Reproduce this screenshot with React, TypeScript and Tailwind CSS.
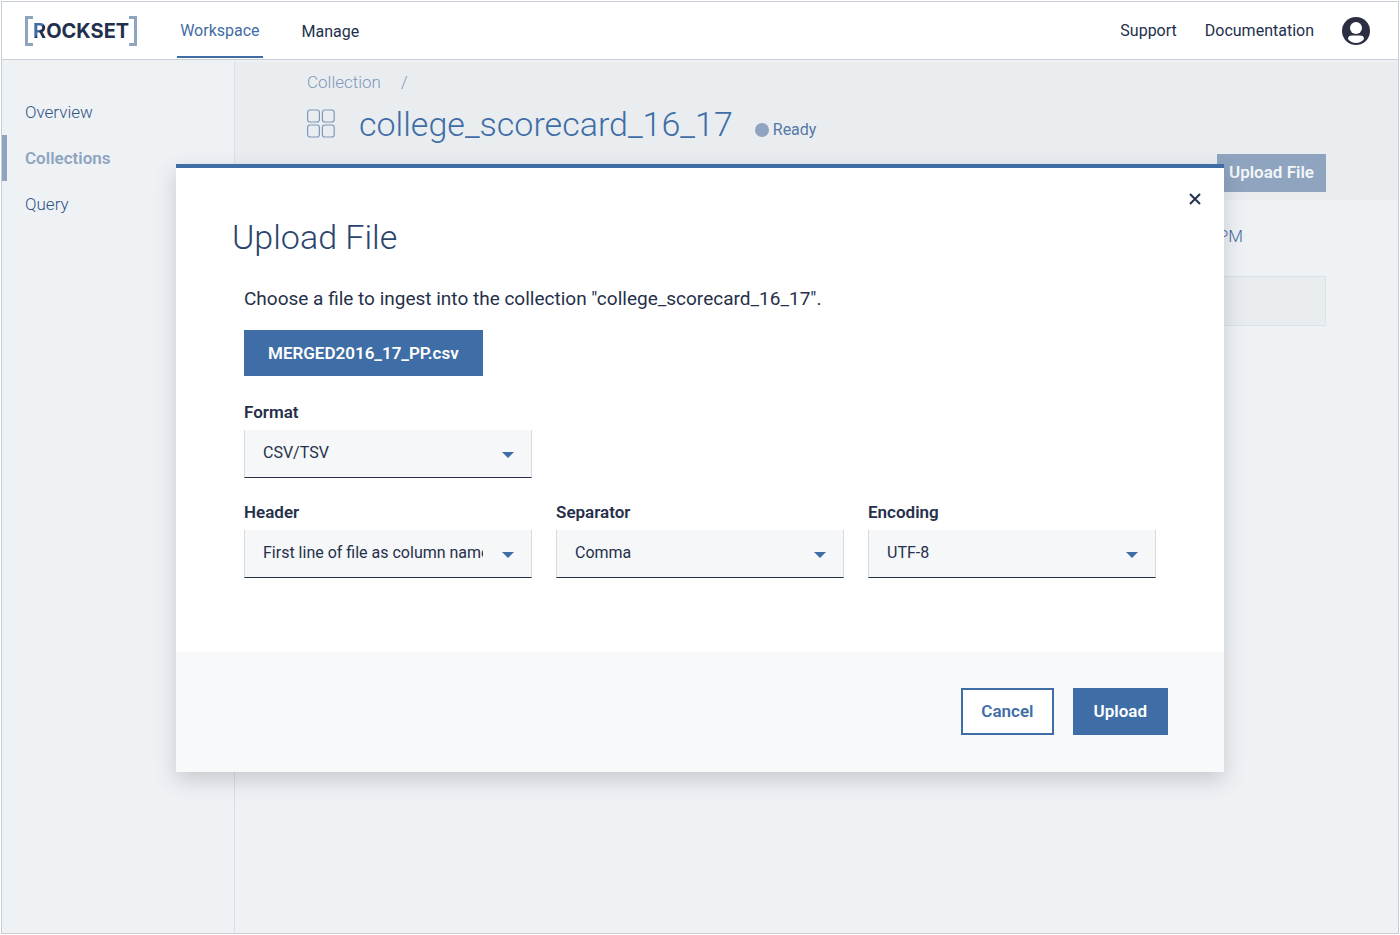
import type { ReactNode } from "react";

const sans = "font-['Roboto','Noto_Sans',sans-serif]";

function Logo() {
  return (
    <a href="#home" aria-label="Rockset home" className="flex h-[30px] items-stretch">
      <span className="w-2 border-y-3 border-l-3 border-[#8fa4be]" />
      <span className="flex items-center font-['Inter',sans-serif] text-[20px] leading-none font-bold text-[#23304d]">
        <span className="bg-linear-to-br from-[#3f6da6] from-50% to-[#23304d] to-50% bg-clip-text text-transparent">R</span>
        OCKSET
      </span>
      <span className="w-2 border-y-3 border-r-3 border-[#8fa4be]" />
    </a>
  );
}

function Avatar() {
  return (
    <svg viewBox="0 0 28 28" className="size-7" aria-hidden="true">
      <circle cx="14" cy="14" r="14" fill="#2b2f41" />
      <circle cx="14" cy="11" r="6" fill="#fff" />
      <path d="M6 22C6 19.500 7.500 18.500 10 18.500H18C20.500 18.500 22 19.500 22 22C20 24.700 17.200 26 14 26C10.800 26 8 24.700 6 22Z" fill="#fff" />
    </svg>
  );
}

function GridIcon() {
  return (
    <svg viewBox="0 0 30 30" className="size-[30px] shrink-0" fill="none" stroke="#7f98b8" strokeWidth="1.2" aria-hidden="true">
      <rect x="0.600" y="1" width="11.800" height="12" rx="2.500" />
      <rect x="15.400" y="1" width="11.800" height="12" rx="2.500" />
      <rect x="0.600" y="16" width="11.800" height="12" rx="2.500" />
      <rect x="15.400" y="16" width="11.800" height="12" rx="2.500" />
    </svg>
  );
}

function SelectField({ id, label, value }: { id: string; label: string; value: string }) {
  return (
    <div className="flex flex-col gap-[6px]">
      <label htmlFor={id} className="text-[17px] leading-6 font-semibold text-[#26304a]">
        {label}
      </label>
      <div className="relative">
        <select
          id={id}
          defaultValue={value}
          className="block h-12 w-full appearance-none border-x border-b border-x-[#d5dae0] border-b-[#26304a] bg-[#f5f7f9] pr-12 pb-px pl-[18px] text-base text-[#26304a]"
        >
          <option>{value}</option>
        </select>
        <svg viewBox="0 0 12 6" className="pointer-events-none absolute top-[22px] right-[18px] h-[6px] w-3" aria-hidden="true">
          <path d="M0 0h12L6 6z" fill="#3f6da6" />
        </svg>
      </div>
    </div>
  );
}

function SideLink({ active, children }: { active?: boolean; children: ReactNode }) {
  return (
    <a
      href="#section"
      className={
        active
          ? "flex h-[46px] items-center border-l-5 border-[#8fa4be] pt-[2px] pl-[18px] font-semibold text-[#8fa4be]"
          : "flex h-[46px] items-center border-l-5 border-transparent pt-[2px] pl-[18px] font-light text-[#2f5286]"
      }
    >
      {children}
    </a>
  );
}

function UploadDialog() {
  return (
    <section
      role="dialog"
      aria-labelledby="dialog-title"
      className="w-full max-w-[1048px] border-t-4 border-[#3f6da6] bg-white shadow-[0_8px_20px_rgba(60,60,70,0.22)]"
    >
      <div className="flex justify-end pt-[19px] pr-[17px]">
        <button type="button" aria-label="Close" className="flex size-6 items-center justify-center">
          <svg viewBox="0 0 12 12" className="size-3" stroke="#23304d" strokeWidth="2" aria-hidden="true">
            <path d="M1 1l10 10M11 1L1 11" />
          </svg>
        </button>
      </div>
      <h2 id="dialog-title" className="px-14 text-[34px] leading-[52px] font-light text-[#2c446d]">
        Upload File
      </h2>
      <div className="px-[68px] pt-6 pb-[74px]">
        <p className="text-[19px] leading-6 text-[#26304a]">
          Choose a file to ingest into the collection "college_scorecard_16_17".
        </p>
        <button type="button" className="mt-[19px] h-[46px] bg-[#3f6da6] px-6 pt-[2px] text-[17px] font-semibold text-white">
          MERGED2016_17_PP.csv
        </button>
        <div className="mt-6 grid grid-cols-3 gap-x-6 gap-y-[22px]">
          <SelectField id="format" label="Format" value="CSV/TSV" />
          <div className="col-span-2" />
          <SelectField id="header" label="Header" value="First line of file as column names" />
          <SelectField id="separator" label="Separator" value="Comma" />
          <SelectField id="encoding" label="Encoding" value="UTF-8" />
        </div>
      </div>
      <footer className="flex justify-end gap-[19px] bg-[#f8f9fb] px-14 pt-9 pb-[37px] text-[17px] font-semibold">
        <button type="button" className="h-[47px] border-2 border-[#3f6da6] bg-white px-[18px] pt-[2px] text-[#3f6da6]">
          Cancel
        </button>
        <button type="button" className="h-[47px] bg-[#3f6da6] px-[21px] pt-[2px] text-white">
          Upload
        </button>
      </footer>
    </section>
  );
}

export default function App() {
  return (
    <div className={`relative flex min-h-screen flex-col bg-white p-px text-[17px] ${sans}`}>
      <div className="flex grow flex-col border border-[#c6ced7]">
        <header className="flex h-[58px] items-center justify-between border-b border-[#c6ced7] bg-white pt-px pr-7 pl-[23px] text-base text-[#23304d]">
          <div className="flex h-full items-center">
            <Logo />
            <nav className="ml-10 flex h-full gap-9">
              <a href="#workspace" className="mb-px flex items-center border-b-2 border-[#3f6da6] px-[3px] pt-[3px] text-[#3f6da6]">
                Workspace
              </a>
              <a href="#manage" className="flex items-center px-[3px] pt-px">
                Manage
              </a>
            </nav>
          </div>
          <nav className="flex items-center gap-7">
            <a href="#support">Support</a>
            <a href="#documentation">Documentation</a>
            <button type="button" aria-label="Account">
              <Avatar />
            </button>
          </nav>
        </header>
        <div className="flex grow bg-[#eef2f5] pt-[2px]">
          <aside className="w-[233px] shrink-0 border-r border-[#d9dfe4] pt-[27px]">
            <nav>
              <SideLink>Overview</SideLink>
              <SideLink active>Collections</SideLink>
              <SideLink>Query</SideLink>
            </nav>
          </aside>
          <main className="grow">
            <div className="bg-[#e9edf0] px-[72px] pt-2 pb-2">
              <div className="flex gap-5 leading-6 font-light text-[#7f98b8]">
                <a href="#collection">Collection</a>
                <span>/</span>
              </div>
              <div className="mt-1 flex items-center">
                <GridIcon />
                <h1 className="ml-[22px] text-[34px] leading-[52px] font-light text-[#3f6da6]">college_scorecard_16_17</h1>
                <div className="ml-[22px] flex items-center gap-1 pt-3 text-base text-[#5578a6]">
                  <span className="size-[14px] rounded-full bg-[#8fa4be]" />
                  Ready
                </div>
              </div>
              <div className="mt-1 flex justify-end">
                <button type="button" className="h-[38px] bg-[#8fa4be] px-3 font-semibold text-[#f3f6f9]">
                  Upload File
                </button>
              </div>
            </div>
            <div className="px-[72px] pt-6">
              <div className="flex justify-end pr-[83px] leading-6 font-light text-[#3f6da6]">
                <span>PM</span>
              </div>
              <div className="mt-7 h-[50px] border border-[#dde2e6] bg-[#e9edf0]" />
            </div>
          </main>
        </div>
      </div>
      <div className="absolute inset-0 flex items-center justify-center">
        <UploadDialog />
      </div>
    </div>
  );
}
